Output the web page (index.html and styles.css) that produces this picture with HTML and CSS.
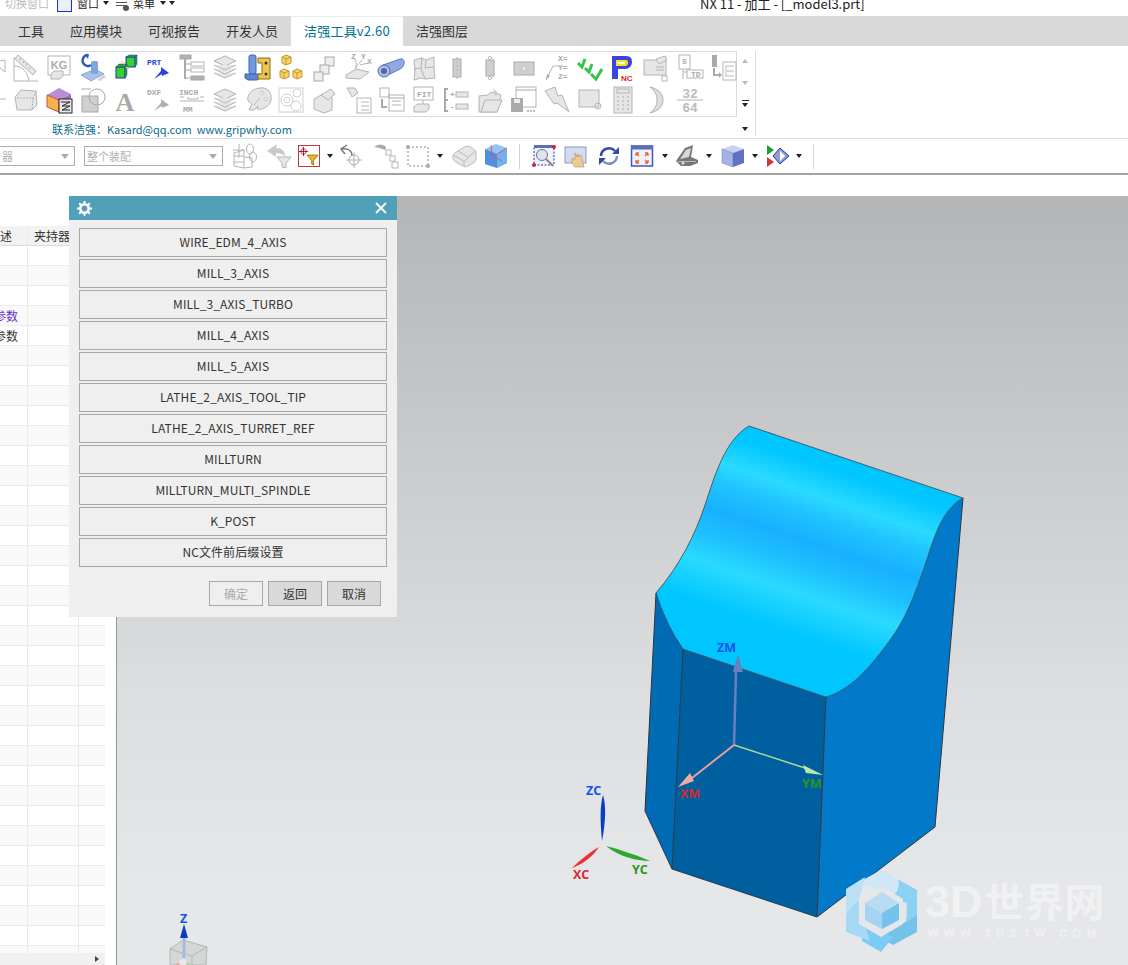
FILE: index.html
```html
<!DOCTYPE html>
<html lang="zh">
<head>
<meta charset="utf-8">
<title>NX 11 - 加工</title>
<link rel="stylesheet" href="styles.css">
</head>
<body>
<div class="app">
  <header class="titlebar">
    <div class="titlebar-inner">
      <span class="tt-dis">切换窗口</span>
      <svg class="win-ico" width="15" height="18" viewBox="0 0 15 18"><rect x=".5" y=".5" width="14" height="17" fill="#e8f0fb" stroke="#1a2fe0"/></svg>
      <span class="tt">窗口</span><i class="caret tt-c1"></i>
      <svg class="menu-ico" width="16" height="18" viewBox="0 0 16 18"><rect x="0" y="2" width="11" height="2" fill="#2c49c9"/><rect x="1" y="8" width="11" height="1" fill="#555"/><rect x="1" y="11" width="9" height="1" fill="#555"/><circle cx="11" cy="14" r="3" fill="#555"/></svg>
      <span class="tt">菜单</span><i class="caret tt-c2"></i><i class="caret tt-c3"></i>
      <span class="tt-title">NX 11 - 加工 - [_model3.prt]</span>
    </div>
  </header>

  <nav class="tabs">
    <span class="tab">工具</span>
    <span class="tab">应用模块</span>
    <span class="tab">可视报告</span>
    <span class="tab">开发人员</span>
    <span class="tab tab-on">洁强工具v2.60</span>
    <span class="tab">洁强图层</span>
  </nav>

  <section class="ribbon">
    <div class="ribbon-main">
      <div class="ribbon-box">
        <div class="ico-row">
          <span class="cell"><svg class="ic" viewBox="0 0 28 28"><path class="l" d="M14 8l12 -2v12z"/></svg></span>
          <span class="cell"><svg class="ic" viewBox="0 0 28 28"><path class="l" d="M2 3v24h24M2 12c8 0 14 6 15 15"/><path class="f" d="M6 1l18 16-3 4L3 5z"/><path class="l" d="M9 4l-1 2M12 7l-1 2M15 10l-1 2M18 13l-1 2"/></svg></span>
          <span class="cell"><svg class="ic" viewBox="0 0 28 28"><rect class="l" x="3" y="2" width="22" height="19"/><text class="kg" x="14" y="14.500">KG</text><path class="f" d="M6 20l3-3h9v5l-3 3H6z"/></svg></span>
          <span class="cell"><svg class="ic" viewBox="0 0 28 28"><path d="M3 21l14-6 9 5-13 7z" fill="#a9c3e8" stroke="#5f85c4" stroke-width=".6"/><rect x="13" y="7" width="7" height="13" rx="1.500" fill="#7ea7e2"/><path d="M10 1a5.500 5.500 0 0 0-3 10 5 5 0 0 0 6 0" fill="none" stroke="#2e5fb4" stroke-width="2.500"/><path d="M11 0l-4 1 3 4z" fill="#2e5fb4"/><path d="M19 26l7-5 2 2-6 4z" fill="#cfcfcf"/></svg></span>
          <span class="cell"><svg class="ic" viewBox="0 0 28 28"><rect x="15" y="3" width="9" height="10" fill="#37d12c" stroke="#1b2fd0"/><path d="M15 3l3-2h8l-2 2zM24 3l2-2v9l-2 3z" fill="#2aa81f" stroke="#1b2fd0" stroke-width=".5"/><rect x="5" y="13" width="9" height="11" fill="#37d12c" stroke="#1b2fd0"/><path d="M5 13l3-3h8l-2 3zM14 13l2-3v11l-2 3z" fill="#2aa81f" stroke="#1b2fd0" stroke-width=".5"/><path d="M10 7l4 3M15 13l3 2" stroke="#f4e04a" stroke-width="1.500"/></svg></span>
          <span class="cell"><svg class="ic" viewBox="0 0 28 28"><text class="tiny blue" x="2" y="11">PRT</text><path d="M9 25l7-8v-4l8 6-7 3v-2z" fill="#2a3fe6"/></svg></span>
          <span class="cell"><svg class="ic" viewBox="0 0 28 28"><rect class="g" x="2" y="1" width="11" height="4"/><path d="M7 5v20" stroke="#aaa" stroke-width="2"/><path d="M7 10h6M7 16h6M7 24h6" stroke="#aaa"/><rect class="l" x="13" y="8" width="13" height="4"/><rect class="l" x="13" y="14" width="13" height="4"/><rect class="g" x="13" y="22" width="13" height="4"/></svg></span>
          <span class="cell"><svg class="ic" viewBox="0 0 28 28"><path class="f" d="M14 2l11 5-11 5L3 7z"/><path class="f" d="M3 11l11 5 11-5M3 15l11 5 11-5M3 19l11 5 11-5"/></svg></span>
          <span class="cell"><svg class="ic" viewBox="0 0 28 28"><rect x="5" y="1" width="7" height="19" rx="2" fill="#6f98dd" stroke="#3e62a8"/><path d="M1 20h15v4l-3 2H4l-3-2z" fill="#5d85cf" stroke="#3e62a8"/><path d="M14 4h12v21H14v-5h4V9h-4z" fill="#efc64b" stroke="#8a6c1a"/><circle cx="22" cy="9" r="1.500" fill="#333"/><circle cx="22" cy="20" r="1.500" fill="#333"/></svg></span>
          <span class="cell"><svg class="ic" viewBox="0 0 28 28"><g fill="#f7d26a" stroke="#c49a2a"><path d="M5 3l4-2 5 2v6l-5 2-4-2z"/><path d="M5 3l4 2 5-2M9 5v6" fill="none"/><path d="M3 17l4-2 5 2v6l-5 2-4-2z"/><path d="M3 17l4 2 5-2M7 19v6" fill="none"/><path d="M16 17l4-2 5 2v6l-5 2-4-2z"/><path d="M16 17l4 2 5-2M20 19v6" fill="none"/></g></svg></span>
          <span class="cell"><svg class="ic" viewBox="0 0 28 28"><rect class="h" x="15" y="3" width="9" height="9"/><rect class="h" x="10" y="11" width="9" height="9"/><rect class="h" x="4" y="18" width="9" height="9"/></svg></span>
          <span class="cell"><svg class="ic" viewBox="0 0 28 28"><path class="f" d="M2 21l10-6 13 3-9 7-14-1z"/><path class="l" d="M12 15V7M12 7l-3-3M12 13l6-7M16 11l8-2"/><text class="tiny" x="7" y="5">Z</text><text class="tiny" x="17" y="5">Y</text><text class="tiny" x="23" y="10">X</text></svg></span>
          <span class="cell"><svg class="ic" viewBox="0 0 28 28"><path d="M6 11L23 5c3-1 5 2 4 5-1 3-2 4-4 5L9 22z" fill="#8eaae0" stroke="#5d7cba"/><ellipse cx="7" cy="17" rx="6" ry="6" fill="#a9bde6" stroke="#4f6cb0"/><ellipse cx="7" cy="17" rx="3" ry="3" fill="#5b63a8"/></svg></span>
          <span class="cell"><svg class="ic" viewBox="0 0 28 28"><path class="f" d="M4 6l8-2 4 2 8-3v10l1 11-9 1-5-1-7 2 1-10z"/><path class="l" d="M12 4l-1 10-7 1M16 6l-1 8 9-1M11 14l4 11"/></svg></span>
          <span class="cell"><svg class="ic" viewBox="0 0 28 28"><rect class="f2" x="10" y="5" width="8" height="18"/><path class="l" d="M14 3v22" stroke-dasharray="2 2"/></svg></span>
          <span class="cell"><svg class="ic" viewBox="0 0 28 28"><rect class="f2" x="10" y="6" width="8" height="16"/><path class="l" d="M14 2l2 2-2 2-2-2zM14 22l2 2-2 2-2-2z"/></svg></span>
          <span class="cell"><svg class="ic" viewBox="0 0 28 28"><rect class="f2" x="4" y="8" width="20" height="13"/><circle cx="14" cy="14.500" r="1" fill="#fff"/></svg></span>
          <span class="cell"><svg class="ic" viewBox="0 0 28 28"><path class="l" d="M3 26l7-14h5"/><path d="M3 26l1-6 3 2z" fill="#aaa"/><text class="tiny" x="15" y="7">X=</text><text class="tiny" x="15" y="16">Y=</text><text class="tiny" x="15" y="25">Z=</text></svg></span>
          <span class="cell"><svg class="ic" viewBox="0 0 28 28"><path d="M2 9l4 4 3-8M9 14l4 4 3-8M15 20l5 5 6-10" fill="none" stroke="#38c24a" stroke-width="3"/></svg></span>
          <span class="cell"><svg class="ic" viewBox="0 0 28 28"><path d="M3 2h14c5 0 6 3 6 6s-2 7-7 7H9v10H3z" fill="#3845e0"/><path d="M7 6h10c2 0 2 2 2 3s-1 3-3 3H7z" fill="#f7e11c"/><path d="M9 8h7v2H9z" fill="#fff"/><text class="nc" x="12" y="27">NC</text></svg></span>
          <span class="cell"><svg class="ic" viewBox="0 0 28 28"><rect class="f" x="2" y="6" width="22" height="15"/><path class="l" d="M14 13h8M14 16h8"/><path class="f" d="M14 5l9-3 2 4-8 4z"/><rect class="l" x="20" y="22" width="5" height="5"/></svg></span>
          <span class="cell"><svg class="ic" viewBox="0 0 28 28"><rect class="l" x="3" y="1" width="11" height="14"/><text class="tiny" x="6" y="10">S</text><path class="l" d="M7 15v10M7 18h4"/><rect class="l" x="11" y="16" width="16" height="8"/><text class="tiny" x="15" y="23">TD</text></svg></span>
          <span class="cell"><svg class="ic" viewBox="0 0 28 28"><rect x="3" y="1" width="5" height="12" fill="#aaa"/><path d="M5 14v7h6" fill="none" stroke="#aaa" stroke-width="2"/><path d="M10 18l3 3-3 3z" fill="#aaa"/><rect class="l" x="14" y="8" width="13" height="18"/><path class="l" d="M18 12h7M18 17h7M18 22h7M17 11v12"/></svg></span>
        </div>
        <div class="ico-row">
          <span class="cell"><svg class="ic" viewBox="0 0 28 28"><path class="l" d="M20 13h7"/></svg></span>
          <span class="cell"><svg class="ic" viewBox="0 0 28 28"><path class="f" d="M3 11l6-7 15 1 1 14-5 5H5z"/><path class="l" d="M5 12h16l3-7M21 12l-1 12" stroke-dasharray="2 1"/></svg></span>
          <span class="cell"><svg class="ic" viewBox="0 0 28 28"><path d="M2 9L14 2l12 6-12 6z" fill="#b88fd6"/><path d="M2 9l12 5v12L2 21z" fill="#f4b24d" stroke="#d9483d"/><path d="M14 14l12-6v6H14z" fill="#9a6ec0"/><rect x="14" y="13" width="13" height="14" fill="#e8e8e8" stroke="#222"/><path d="M16 16h9l-8 4h8l-8 4h8" fill="none" stroke="#222"/></svg></span>
          <span class="cell"><svg class="ic" viewBox="0 0 28 28"><path class="g" d="M3 3h10"/><rect class="f2" x="4" y="10" width="16" height="16"/><circle class="hn" cx="19" cy="11" r="8"/></svg></span>
          <span class="cell"><svg class="ic" viewBox="0 0 28 28"><text class="big-a" x="14" y="25">A</text></svg></span>
          <span class="cell"><svg class="ic" viewBox="0 0 28 28"><text class="tiny" x="2" y="9">DXF</text><path d="M9 25l7-8v-4l8 6-7 3v-2z" fill="#b0b0b0"/></svg></span>
          <span class="cell"><svg class="ic" viewBox="0 0 28 28"><text class="tiny" x="1" y="9">INCH</text><path class="l" d="M2 11h4M10 11v2H20v-2M22 11h4"/><path class="l" d="M2 15h24"/><text class="tiny" x="5" y="26">MM</text></svg></span>
          <span class="cell"><svg class="ic" viewBox="0 0 28 28"><path class="f lt" d="M14 3l11 5-11 5L3 8z"/><path class="f lt" d="M3 12l11 5 11-5M3 16l11 5 11-5M3 20l11 5 11-5"/></svg></span>
          <span class="cell"><svg class="ic" viewBox="0 0 28 28"><path class="f lt" d="M4 15C2 6 12 1 20 2c6 1 9 9 6 15-3 5-9 7-13 6l1-3-4 4H5l3-6z"/><circle class="l lt" cx="18" cy="7" r="2"/><circle class="l lt" cx="22" cy="13" r="2"/><path class="l" d="M16 12l-6 7"/></svg></span>
          <span class="cell"><svg class="ic" viewBox="0 0 28 28"><rect class="l lt" x="2" y="2" width="24" height="24"/><circle class="l lt" cx="10" cy="14" r="6"/><circle class="l lt" cx="10" cy="14" r="3"/><circle class="l lt" cx="20" cy="7" r="4"/><circle class="l lt" cx="19" cy="20" r="5"/></svg></span>
          <span class="cell"><svg class="ic" viewBox="0 0 28 28"><path class="f lt" d="M4 13l9-5 9 4v12l-8 3-10-4z"/><path class="f lt" d="M11 9l10-6 4 5-7 6z"/></svg></span>
          <span class="cell"><svg class="ic" viewBox="0 0 28 28"><path class="f lt" d="M3 2l8 0 3 5-6 4z"/><rect class="l" x="13" y="12" width="14" height="15"/><path class="l" d="M17 16h8M17 20h8M17 24h8"/></svg></span>
          <span class="cell"><svg class="ic" viewBox="0 0 28 28"><rect class="l" x="3" y="2" width="9" height="9"/><rect class="l" x="12" y="9" width="15" height="16"/><path class="g" d="M12 12h15"/><path class="l" d="M15 15h9M15 19h9"/><path d="M5 13v8h5" fill="none" stroke="#aaa" stroke-width="2"/></svg></span>
          <span class="cell"><svg class="ic" viewBox="0 0 28 28"><rect class="l" x="4" y="1" width="19" height="13"/><text class="tiny" x="7" y="11">FIT</text><path class="l" d="M13 14v5"/><path class="f" d="M4 21l3-3h12v5l-3 3H4z"/></svg></span>
          <span class="cell"><svg class="ic" viewBox="0 0 28 28"><path d="M5 3H2v22h3M2 14h3" fill="none" stroke="#aaa" stroke-width="2"/><text class="tiny" x="7" y="11">+</text><rect class="f" x="13" y="6" width="12" height="5"/><text class="tiny" x="7" y="23">-</text><rect class="f" x="13" y="18" width="12" height="5"/></svg></span>
          <span class="cell"><svg class="ic" viewBox="0 0 28 28"><path class="f lt" d="M3 10l9-1 3-3 10 3-4 17H3z"/><path class="f lt" d="M5 26l4-12 17 0-5 12z"/><path d="M17 2l6 6-4 2z" fill="#ccc"/></svg></span>
          <span class="cell"><svg class="ic" viewBox="0 0 28 28"><rect class="l" x="6" y="1" width="20" height="20"/><path class="g" d="M6 4h20"/><rect x="1" y="12" width="12" height="14" fill="#aaa"/><rect x="4" y="13" width="6" height="4" fill="#eee"/><path d="M17 25h2M20 25h2M23 25h2" stroke="#777"/></svg></span>
          <span class="cell"><svg class="ic" viewBox="0 0 28 28"><path class="f lt" d="M2 5l10-4 3 9 4-1 7 17-12-9-3 1z"/></svg></span>
          <span class="cell"><svg class="ic" viewBox="0 0 28 28"><rect class="f lt" x="3" y="4" width="20" height="17"/><circle class="l" cx="22" cy="20" r="3"/></svg></span>
          <span class="cell"><svg class="ic" viewBox="0 0 28 28"><rect class="f lt" x="5" y="1" width="18" height="26"/><rect class="l" x="8" y="3" width="12" height="4"/><path d="M8 11h2M13 11h2M18 11h2M8 15h2M13 15h2M18 15h2M8 19h2M13 19h2M18 19h2M8 23h2M13 23h2M18 23h2" stroke="#aaa"/></svg></span>
          <span class="cell"><svg class="ic" viewBox="0 0 28 28"><path d="M8 1c9 2 13 7 13 13s-4 11-13 13c5-4 7-8 7-13S13 5 8 1z" fill="#ddd" stroke="#b4b4b4"/></svg></span>
          <span class="cell"><svg class="ic" viewBox="0 0 28 28"><text class="tiny num" x="14" y="12">32</text><path class="l" d="M1 14h26"/><text class="tiny num" x="14" y="26">64</text></svg></span>
        </div>
      </div>
      <p class="contact">联系洁强：Kasard@qq.com&nbsp; www.gripwhy.com</p>
    </div>
    <div class="ribbon-scroll">
      <i class="s-up"></i>
      <i class="s-down"></i>
      <i class="s-more"></i>
      <i class="s-corner"></i>
    </div>
  </section>

  <section class="toolbar">
    <div class="combo combo-a"><span class="combo-text">器</span><i class="c-arrow"></i></div>
    <div class="combo combo-b"><span class="combo-text">整个装配</span><i class="c-arrow"></i></div>
    <div class="tools">
      <svg class="ti" viewBox="0 0 26 26"><path class="l" d="M1 10l10-3v18l-10-2zM11 13H1M11 19H1M11 14l8 1v9l-8 1M6 1v14M0 7h12"/><ellipse class="l" cx="17" cy="6" rx="3.500" ry="5"/><ellipse class="l" cx="20" cy="14" rx="3.500" ry="5"/></svg>
      <svg class="ti" viewBox="0 0 26 26"><path d="M11 1L1 8l9 6V10c4 0 7 1 9 4 0-6-3-9-9-9z" fill="#c8c8c8"/><path class="f lt" d="M11 14h14l-5 6v5l-4-1v-4z"/></svg>
      <span class="filter-btn"><svg class="ti" viewBox="0 0 22 22"><circle cx="5" cy="6" r="3" fill="none" stroke="#c33"/><path d="M5 1v10M0 6h10" stroke="#903"/><path d="M9 10h12l-5 6v5l-2-1v-4z" fill="#f0b429" stroke="#9a7410"/></svg></span>
      <i class="caret"></i>
      <svg class="ti" viewBox="0 0 26 26"><path d="M9 2L3 6l4 5" fill="none" stroke="#777" stroke-width="1.500"/><path d="M3 6c8-1 11 2 11 7" fill="none" stroke="#777" stroke-width="1.500"/><circle class="hn" cx="16" cy="17" r="5"/><path class="l" d="M16 9v16M8 17h16"/></svg>
      <svg class="ti" viewBox="0 0 26 26"><path d="M1 4c4-3 7-3 9-2 3 1 4 3 2 5L6 5z" fill="#aaa"/><rect class="l" x="13" y="7" width="5" height="5"/><rect class="l" x="17" y="13" width="5" height="5"/><rect class="l" x="19" y="19" width="6" height="6"/></svg>
      <svg class="ti" viewBox="0 0 26 26"><rect x="3" y="4" width="20" height="19" fill="none" stroke="#888" stroke-dasharray="2 2"/><circle cx="3" cy="4" r="2" fill="#aaa"/><circle cx="23" cy="23" r="2" fill="#aaa"/></svg>
      <i class="caret"></i>
      <svg class="ti ti-lg" viewBox="0 0 26 24"><path class="f lt" d="M1 13c0-2 1-4 3-5l10-6c2-1 4-1 6 0l4 3c1 1 2 2 2 4v6c0 2-1 3-2 4l-7 4c-2 1-3 1-5 0l-9-5c-1-1-2-3-2-5z"/><path class="l" d="M2 11l11 7 12-11M13 18v5M7 7l10 6"/></svg>
      <svg class="ti ti-lg" viewBox="0 0 24 24"><path d="M1 5l11-5 11 4v15l-10 5-12-4z" fill="#8fc5f5"/><path d="M1 5l12 5v14L1 20z" fill="#4f8fe0"/><path d="M13 10l10-6v15l-10 5z" fill="#6fb2ee"/><path d="M7 1l1 11 10 5M13 10l10-6" fill="none" stroke="#e2557c"/></svg>
      <i class="vsep"></i>
      <svg class="ti ti-lg" viewBox="0 0 24 24"><rect x="2" y="3" width="20" height="18" fill="#eef2fb" stroke="#2230c8" stroke-dasharray="2 1.500"/><rect x="2" y="1" width="20" height="3" fill="#5a6fb8"/><circle cx="10" cy="11" r="5.500" fill="#dbe6f2" stroke="#777"/><path d="M14 15l7 7" stroke="#888" stroke-width="2"/><circle cx="22" cy="3" r="2" fill="#d22"/><circle cx="2" cy="21" r="2" fill="#d22"/></svg>
      <svg class="ti ti-lg" viewBox="0 0 24 24"><rect x="1" y="3" width="21" height="16" fill="#d5dbee" stroke="#8e97bd"/><path d="M11 23c-3-3-4-7-3-9l3 2V9l2 4 1-3 1 3 2-2 1 4 2 8z" fill="#eecb94" stroke="#b78d4f" stroke-width=".6"/></svg>
      <svg class="ti ti-lg" viewBox="0 0 24 24"><path d="M4 12a8 8 0 0 1 14-5" fill="none" stroke="#2f4a9e" stroke-width="2.500"/><path d="M20 12a8 8 0 0 1-14 5" fill="none" stroke="#7d8fc2" stroke-width="2.500"/><path d="M22 3v7h-7z" fill="#2f4a9e"/><path d="M2 21v-7h7z" fill="#2f4a9e"/></svg>
      <svg class="ti ti-lg" viewBox="0 0 24 24"><rect x="1.500" y="2" width="21" height="20" fill="#eef2fb" stroke="#4255c4" stroke-width="1.500"/><rect x="1" y="1.500" width="22" height="4" fill="#5a6fb8"/><path d="M6 9l3 3M6 9h3M6 9v3M18 9l-3 3M18 9h-3M18 9v3M6 19l3-3M6 19h3M6 19v-3M18 19l-3-3M18 19h-3M18 19v-3" stroke="#e8613a" fill="none" stroke-width="1.300"/></svg>
      <i class="caret"></i>
      <svg class="ti ti-lg" viewBox="0 0 24 24"><path d="M1 17L10 4l8-3-2 12 7 3v3l-8 3H6z" fill="#777"/><path d="M5 15l6-9 5-2-2 9z" fill="#d8d8d8"/><path d="M3 17h18v1H3z" fill="#bbb"/><circle cx="8" cy="19" r="1.500" fill="#ddd"/></svg>
      <i class="caret"></i>
      <svg class="ti ti-lg" viewBox="0 0 24 24"><path d="M1 5l11-4 11 4-11 4z" fill="#c8d2f0"/><path d="M1 5l11 4v14L1 19z" fill="#a3b3e6" stroke="#6c7fc8" stroke-width=".5"/><path d="M12 9l11-4v14l-11 4z" fill="#5f72c2"/></svg>
      <i class="caret"></i>
      <svg class="ti ti-lg" viewBox="0 0 24 24"><path d="M1 1v10l7-5z" fill="#1e9d3b"/><path d="M1 13v10l7-5z" fill="#d6343b"/><path d="M14 4l9 8-9 8-7-8z" fill="#8f9fd8" stroke="#2a3a8c"/><path d="M14 7l5 5-5 5z" fill="#fff"/></svg>
      <i class="caret"></i>
      <i class="vsep"></i>
    </div>
  </section>

  <main class="main">
    <aside class="panel">
      <div class="table">
        <div class="row row-head"><span class="c c1 clip">描述</span><span class="c c2">夹持器</span><span class="c c3"></span></div>
        <div class="rows">
          <div class="row"><span class="c c1"></span><span class="c c2"></span><span class="c c3"></span></div>
          <div class="row"><span class="c c1"></span><span class="c c2"></span><span class="c c3"></span></div>
          <div class="row"><span class="c c1"></span><span class="c c2"></span><span class="c c3"></span></div>
          <div class="row"><span class="c c1 clip purple">参数</span><span class="c c2"></span><span class="c c3"></span></div>
          <div class="row"><span class="c c1 clip">参数</span><span class="c c2"></span><span class="c c3"></span></div>
          <div class="row"><span class="c c1"></span><span class="c c2"></span><span class="c c3"></span></div>
          <div class="row"><span class="c c1"></span><span class="c c2"></span><span class="c c3"></span></div>
          <div class="row"><span class="c c1"></span><span class="c c2"></span><span class="c c3"></span></div>
          <div class="row"><span class="c c1"></span><span class="c c2"></span><span class="c c3"></span></div>
          <div class="row"><span class="c c1"></span><span class="c c2"></span><span class="c c3"></span></div>
          <div class="row"><span class="c c1"></span><span class="c c2"></span><span class="c c3"></span></div>
          <div class="row"><span class="c c1"></span><span class="c c2"></span><span class="c c3"></span></div>
          <div class="row"><span class="c c1"></span><span class="c c2"></span><span class="c c3"></span></div>
          <div class="row"><span class="c c1"></span><span class="c c2"></span><span class="c c3"></span></div>
          <div class="row"><span class="c c1"></span><span class="c c2"></span><span class="c c3"></span></div>
          <div class="row"><span class="c c1"></span><span class="c c2"></span><span class="c c3"></span></div>
          <div class="row"><span class="c c1"></span><span class="c c2"></span><span class="c c3"></span></div>
          <div class="row"><span class="c c1"></span><span class="c c2"></span><span class="c c3"></span></div>
          <div class="row"><span class="c c1"></span><span class="c c2"></span><span class="c c3"></span></div>
          <div class="row"><span class="c c1"></span><span class="c c2"></span><span class="c c3"></span></div>
          <div class="row"><span class="c c1"></span><span class="c c2"></span><span class="c c3"></span></div>
          <div class="row"><span class="c c1"></span><span class="c c2"></span><span class="c c3"></span></div>
          <div class="row"><span class="c c1"></span><span class="c c2"></span><span class="c c3"></span></div>
          <div class="row"><span class="c c1"></span><span class="c c2"></span><span class="c c3"></span></div>
          <div class="row"><span class="c c1"></span><span class="c c2"></span><span class="c c3"></span></div>
          <div class="row"><span class="c c1"></span><span class="c c2"></span><span class="c c3"></span></div>
          <div class="row"><span class="c c1"></span><span class="c c2"></span><span class="c c3"></span></div>
          <div class="row"><span class="c c1"></span><span class="c c2"></span><span class="c c3"></span></div>
          <div class="row"><span class="c c1"></span><span class="c c2"></span><span class="c c3"></span></div>
          <div class="row"><span class="c c1"></span><span class="c c2"></span><span class="c c3"></span></div>
          <div class="row"><span class="c c1"></span><span class="c c2"></span><span class="c c3"></span></div>
          <div class="row"><span class="c c1"></span><span class="c c2"></span><span class="c c3"></span></div>
          <div class="row"><span class="c c1"></span><span class="c c2"></span><span class="c c3"></span></div>
          <div class="row"><span class="c c1"></span><span class="c c2"></span><span class="c c3"></span></div>
          <div class="row"><span class="c c1"></span><span class="c c2"></span><span class="c c3"></span></div>
          <div class="row"><span class="c c1"></span><span class="c c2"></span><span class="c c3"></span></div>
        </div>
        <div class="hscroll"><i class="h-arrow"></i></div>
      </div>
    </aside>

    <div class="viewport">
      <svg class="scene" viewBox="117 196 1011 769" width="1011" height="769">
        <defs>
          <linearGradient id="topFace" gradientUnits="userSpaceOnUse" x1="800" y1="442" x2="728" y2="655">
            <stop offset="0" stop-color="#00c6ff"/>
            <stop offset=".07" stop-color="#00c6ff"/>
            <stop offset=".2" stop-color="#2adaff"/>
            <stop offset=".29" stop-color="#1fc4ff"/>
            <stop offset=".41" stop-color="#18b0ff"/>
            <stop offset=".53" stop-color="#1ec2ff"/>
            <stop offset=".64" stop-color="#2adaff"/>
            <stop offset=".82" stop-color="#00c6ff"/>
            <stop offset="1" stop-color="#00c6ff"/>
          </linearGradient>
        </defs>
        <path d="M963 498L935 827 817 917 826 697C850 690 870 668 890 640 905 620 915 595 925 565 932 545 940 510 963 498Z" fill="#0279c9"/>
        <path d="M683 649L826 697 817 917 672 869Z" fill="#005f9f"/>
        <path d="M656 593L683 649 672 869 645 811Z" fill="#006bb5"/>
        <path d="M749 426L963 498C940 510 932 545 925 565 915 595 905 620 890 640 870 668 850 690 826 697L683 649Q666 625 656 593C680 565 695 535 705 505 715 475 725 440 749 426Z" fill="url(#topFace)" stroke="#3b4650" stroke-width=".8"/>
        <path d="M656 593L645 811 672 869 817 917 935 827 963 498M683 649L672 869M826 697L817 917" fill="none" stroke="#2c3640" stroke-width="1"/>

        <path d="M734 745L736 672" stroke="#6a7fc0" stroke-width="2.500"/>
        <path d="M738 654L733 672H743Z" fill="#6a7fc0"/>
        <path d="M734 745L808 769" stroke="#a8d89a" stroke-width="1.500"/>
        <path d="M823 775L803 765 806 773Z" fill="#bde6a8"/>
        <path d="M734 745L692 778" stroke="#e4a0a0" stroke-width="2"/>
        <path d="M678 787L690 773 694 781Z" fill="#f3a9a4"/>
        <text class="axis" x="717" y="652" fill="#1252f0">ZM</text>
        <text class="axis" x="680" y="798" fill="#d02b2f">XM</text>
        <text class="axis" x="802" y="788" fill="#2d9420">YM</text>

        <path d="M602 841C600 820 600 805 603 795 606 805 606 820 602 841Z" fill="#0b3cc4"/>
        <path d="M599 847C590 852 580 860 572 868 585 863 593 856 599 847Z" fill="#e5333a"/>
        <path d="M606 846C622 850 638 856 650 861 636 861 618 856 606 846Z" fill="#2ea82e"/>
        <text class="axis" x="586" y="795" fill="#1252f0">ZC</text>
        <text class="axis" x="573" y="879" fill="#d02b2f">XC</text>
        <text class="axis" x="632" y="874" fill="#2d9420">YC</text>

        <path d="M170 949L183 940 207 947 206 965H170Z" fill="#d5d6d6" stroke="#b4b6b8"/>
        <path d="M170 949L192 956 207 947M192 956V965" fill="none" stroke="#b4b6b8"/>
        <path d="M184 958V935" stroke="#a4bbe2" stroke-width="3"/>
        <path d="M184 924L180 938H188Z" fill="#0b3cc4"/>
        <text class="axis" x="180" y="923" fill="#1252f0">Z</text>
        <circle cx="183" cy="963" r="4" fill="#e9e9e9"/>
        <circle cx="178" cy="965" r="2" fill="#e9a8a0"/>
        <circle cx="188" cy="965" r="2" fill="#a8d8a0"/>

        <g class="logo">
          <path d="M881 870L917 890 905 903 881 889 870 877Z" fill="#8bd1f3"/>
          <path d="M881 870L852 886C862 884 880 888 893 896 898 892 900 885 898 879Z" fill="#cfe7f6"/>
          <path d="M917 890V932L905 925C908 915 907 903 905 893Z" fill="#8bd1f3"/>
          <path d="M917 915V932L893 945 860 927C880 932 905 925 917 915Z" fill="#75c3ea"/>
          <path d="M862 925L893 937 881 952 862 941Z" fill="#7accf4"/>
          <path d="M846 889L865 877 860 897 864 921 846 932Z" fill="#bde0f5"/>
          <path d="M846 915C852 905 858 900 864 898L864 921 870 941 846 932Z" fill="#a6d9f5"/>
          <path d="M881 886L903 899V924L881 937 859 924V899Z" fill="#e6e7e9"/>
          <path d="M882 892L899 903 882 913 865 903Z" fill="#b9dcf5"/>
          <path d="M865 903L882 913V929L865 920Z" fill="#a4d4f4"/>
          <path d="M899 903L882 913V929L899 920Z" fill="#75c2ec"/>
        </g>
        <text class="wm" x="925" y="917">3D<tspan class="wm-cjk" dx="2">世界网</tspan></text>
        <text class="wm-url" x="928" y="937">WWW.3DSJW.COM</text>
      </svg>
    </div>
  </main>

  <div class="dialog">
    <div class="dlg-head">
      <svg class="dlg-gear" width="15" height="15" viewBox="0 0 15 15"><circle cx="7.500" cy="7.500" r="4.200" fill="none" stroke="#fff" stroke-width="2.600"/><path d="M7.500 0v2.500M7.500 12.500V15M0 7.500h2.500M12.500 7.500H15M2.200 2.200l1.800 1.800M11 11l1.800 1.800M2.200 12.800L4 11M11 4l1.800-1.800" stroke="#fff" stroke-width="2"/></svg>
      <svg class="dlg-x" width="12" height="12" viewBox="0 0 12 12"><path d="M1 1l10 10M11 1L1 11" stroke="#fff" stroke-width="1.800"/></svg>
    </div>
    <div class="dlg-list">
      <button class="dlg-btn">WIRE_EDM_4_AXIS</button>
      <button class="dlg-btn">MILL_3_AXIS</button>
      <button class="dlg-btn">MILL_3_AXIS_TURBO</button>
      <button class="dlg-btn">MILL_4_AXIS</button>
      <button class="dlg-btn">MILL_5_AXIS</button>
      <button class="dlg-btn">LATHE_2_AXIS_TOOL_TIP</button>
      <button class="dlg-btn">LATHE_2_AXIS_TURRET_REF</button>
      <button class="dlg-btn">MILLTURN</button>
      <button class="dlg-btn">MILLTURN_MULTI_SPINDLE</button>
      <button class="dlg-btn">K_POST</button>
      <button class="dlg-btn">NC文件前后缀设置</button>
    </div>
    <div class="dlg-foot">
      <button class="foot-btn foot-off">确定</button>
      <button class="foot-btn">返回</button>
      <button class="foot-btn">取消</button>
    </div>
  </div>
</div>
</body>
</html>
```

FILE: styles.css
```css
* { box-sizing: border-box; }
html, body { margin: 0; padding: 0; }
body {
  width: 1128px;
  height: 965px;
  overflow: hidden;
  background: #fff;
  font-family: "Noto Sans CJK SC", "Noto Sans", sans-serif;
  font-size: 12px;
  color: #333;
}
.app { position: relative; width: 1128px; height: 965px; overflow: hidden; display: flex; flex-direction: column; }

/* title bar */
.titlebar { height: 16px; overflow: hidden; flex: none; }
.titlebar-inner { display: flex; align-items: center; height: 18px; margin-top: -6px; font-size: 11px; }
.tt-dis { color: #bbb; margin-left: 5px; width: 52px; }
.win-ico { flex: none; margin-right: 5px; }
.tt { color: #222; }
.menu-ico { flex: none; margin: 0 2px 0 6px; }
.tt-title { margin-left: 525px; font-size: 13px; color: #222; white-space: nowrap; }
.caret { display: inline-block; width: 0; height: 0; border-left: 3.500px solid transparent; border-right: 3.500px solid transparent; border-top: 4px solid #222; }
.tt-c1 { margin-left: 4px; }
.tt-c2 { margin-left: 5px; }
.tt-c3 { margin-left: 3px; }

/* tabs */
.tabs { height: 30px; flex: none; display: flex; padding-left: 5px; background: #d9d9d9; font-size: 13px; line-height: 30px; color: #333; }
.tab { padding: 0 13px; }
.tab-on { background: #fff; color: #00708f; border-top: 1px solid #ececec; line-height: 28px; letter-spacing: .2px; }

/* ribbon */
.ribbon { height: 93px; flex: none; display: flex; border-bottom: 1px solid #dadada; overflow: hidden; }
.ribbon-main { width: 737px; flex: none; padding-top: 5px; overflow: hidden; }
.ribbon-box { width: 737px; height: 66px; border: 1px solid #dadada; border-left: 0; }
.ico-row { display: flex; height: 32px; align-items: center; margin-left: -24px; }
.cell { width: 33.2px; flex: none; display: flex; justify-content: center; align-items: center; }
.ic { width: 28px; height: 28px; display: block; overflow: visible; }
.l { fill: none; stroke: #b4b4b4; }
.lt { stroke: #cfcfcf; }
.g { fill: #b0b0b0; stroke: #a8a8a8; }
.h { fill: #eee; stroke: #a8a8a8; }
.hn { fill: none; stroke: #a8a8a8; }
.f { fill: #e6e6e6; stroke: #b4b4b4; }
.f2 { fill: #cfcfcf; stroke: #aaa; }
.kg { font: bold 11px "Liberation Sans", sans-serif; fill: #aaa; text-anchor: middle; }
.tiny { font: bold 8px "Liberation Mono", monospace; fill: #aaa; }
.blue { fill: #2a3fe6; }
.num { font-size: 13px; text-anchor: middle; fill: #bbb; }
.nc { font: bold 8px "Liberation Sans", sans-serif; fill: #e8212b; }
.big-a { font: bold 26px "Liberation Serif", serif; fill: #a8a8a8; text-anchor: middle; }
.contact { margin: 4px 0 0 52px; font-size: 11px; line-height: 16px; color: #0d6a8c; white-space: nowrap; }
.ribbon-scroll { position: relative; width: 19px; height: 85px; margin-top: 5px; border-right: 1px solid #dadada; flex: none; }
.s-up, .s-down, .s-more, .s-corner { position: absolute; left: 5px; width: 0; height: 0; border-left: 3.500px solid transparent; border-right: 3.500px solid transparent; }
.s-up { top: 8px; border-bottom: 4px solid #bbb; }
.s-down { top: 30px; border-top: 4px solid #bbb; }
.s-more { top: 52px; border-top: 4px solid #222; }
.s-more::before { content: ""; position: absolute; left: -3.500px; top: -7px; width: 7px; height: 1px; background: #222; }
.s-corner { top: 76px; border-top: 4px solid #222; }

/* toolbar */
.toolbar { height: 36px; flex: none; display: flex; align-items: center; border-bottom: 2px solid #a3a3a3; overflow: hidden; }
.combo { height: 20px; display: flex; align-items: center; justify-content: space-between; padding: 0 5px 0 2px; border: 1px solid #adadad; color: #b0b0b0; flex: none; font-size: 11px; }
.combo-a { width: 76px; margin-left: -1px; margin-right: 9px; }
.combo-b { width: 139px; margin-right: 8px; }
.c-arrow { width: 0; height: 0; border-left: 4.500px solid transparent; border-right: 4.500px solid transparent; border-top: 5px solid #aaa; }
.tools { display: grid; grid-template-columns: 30px 36px 24px 18px 24px 46px 18px 26px 22px 42px 4px 46px 18px 48px 18px 28px 16px 28px 20px 24px 22px 20px 8px; grid-auto-flow: column; justify-items: center; align-items: center; }
.ti { width: 26px; height: 26px; display: block; overflow: visible; }
.ti-lg { width: 24px; height: 24px; }
.filter-btn { width: 22px; height: 22px; display: block; border: 1px solid #c23a3a; }
.filter-btn .ti { width: 20px; height: 20px; }
.vsep { width: 1px; height: 25px; background: #d5d5d5; display: block; }

/* main */
.main { flex: 1; display: flex; min-height: 0; }
.panel { width: 116px; flex: none; padding: 51px 11px 0 0; height: 790px; }
.table { display: flex; flex-direction: column; height: 739px; width: 105px; }
.rows { flex: 1; overflow: hidden; }
.row { display: flex; height: 20px; border-bottom: 1px solid #ebebeb; background: #fff; line-height: 19px; }
.rows .row:nth-child(even) { background: #f9f9f9; }
.row-head { background: #f2f2f2; border-bottom-color: #dcdcdc; flex: none; color: #333; }
.c { display: block; border-right: 1px solid #ebebeb; overflow: hidden; white-space: nowrap; }
.c1 { width: 28px; }
.c2 { width: 51px; padding-left: 6px; }
.c3 { width: 26px; border-right: 0; }
.clip { direction: rtl; padding-right: 9px; }
.row-head .clip { padding-right: 15px; }
.purple { color: #6a2fd0; }
.hscroll { height: 12px; flex: none; background: #f0f0f0; position: relative; }
.h-arrow { position: absolute; left: 95px; top: 3px; width: 0; height: 0; border-top: 3.500px solid transparent; border-bottom: 3.500px solid transparent; border-left: 4px solid #444; }

.viewport { flex: 1; margin-top: 21px; border-left: 1px solid #8f969c; background: linear-gradient(180deg, #b3b5b7 0%, #c6c7c9 28%, #dddee0 65%, #e6e7e9 90%); overflow: hidden; }
.scene { display: block; }
.axis { font: bold 12.500px "Open Sans", "Liberation Sans", sans-serif; }
.wm { font: bold 45px "Liberation Sans", "Noto Sans CJK SC", sans-serif; fill: #f0f1f3; }
.wm-cjk { font: bold 40px "Noto Sans CJK SC", sans-serif; }
.wm-url { font: bold 11px "Liberation Sans", sans-serif; letter-spacing: 5.700px; fill: #f0f1f3; }

/* dialog */
.dialog { position: absolute; left: 69px; top: 196px; width: 328px; height: 421px; background: #efefef; display: flex; flex-direction: column; }
.dlg-head { height: 24px; flex: none; background: #529fb9; display: flex; align-items: center; justify-content: space-between; padding: 0 10px 0 8px; }
.dlg-list { display: flex; flex-direction: column; gap: 2px; padding: 8px 9px 0 10px; }
.dlg-btn { height: 29px; width: 308px; border: 1px solid #a8a8a8; background: #efefef; color: #333; font: 12px "Noto Sans CJK SC", "Noto Sans", sans-serif; letter-spacing: .1px; padding: 0 0 2px; }
.dlg-foot { display: flex; justify-content: flex-end; gap: 5px; padding: 14px 16px 0 0; }
.foot-btn { width: 54px; height: 25px; border: 1px solid #a8a8a8; background: #d9d9d9; color: #333; font: 12px "Noto Sans CJK SC", "Noto Sans", sans-serif; padding: 0; }
.foot-off { background: #efefef; color: #aaa; }
```
